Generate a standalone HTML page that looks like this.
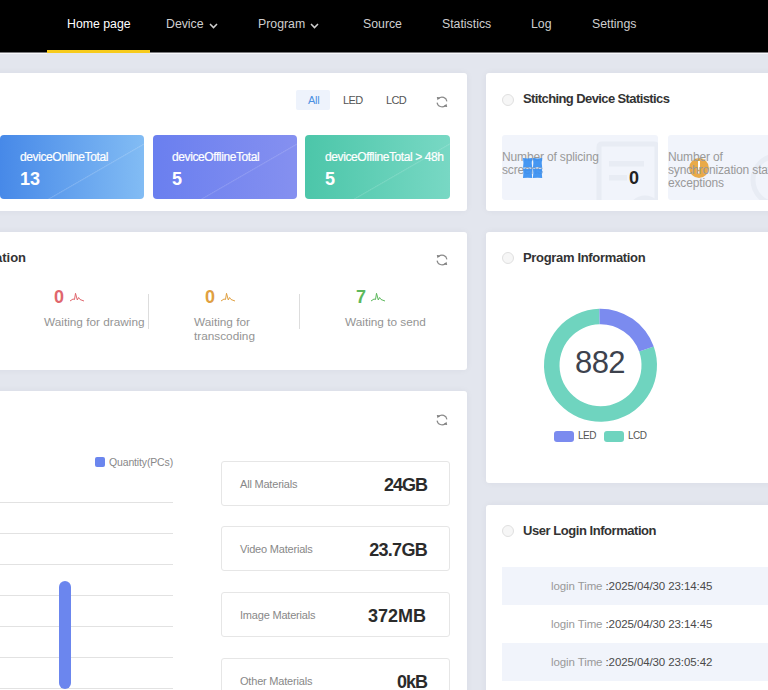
<!DOCTYPE html>
<html><head><meta charset="utf-8">
<style>
*{margin:0;padding:0;box-sizing:border-box}
html,body{width:768px;height:690px;overflow:hidden;background:#e3e6ee;font-family:"Liberation Sans",sans-serif}
.abs{position:absolute}
.nav{position:absolute;left:0;top:0;width:768px;height:52px;background:#000}
.nav .it{position:absolute;top:17px;font-size:12.3px;color:#cfcfcf;white-space:nowrap;line-height:15px}
.nav .home{color:#fff}
.nav .ul{position:absolute;left:47px;top:50px;width:103px;height:3px;background:#f7cb1c;z-index:2}
.navl1{position:absolute;left:0;top:52px;width:768px;height:1px;background:#7a7a7e}
.navl2{position:absolute;left:0;top:53px;width:768px;height:1px;background:#f7f8fb}
.chev{position:absolute;width:5px;height:5px;border-right:1.3px solid #cfcfcf;border-bottom:1.3px solid #cfcfcf;transform:rotate(45deg)}
.card{position:absolute;background:#fff;border-radius:3px;box-shadow:0 0 7px rgba(20,30,60,0.05)}
.t{position:absolute;white-space:nowrap}
.title{font-size:13px;font-weight:bold;color:#333}
.ico-c{position:absolute;width:12px;height:12px;border-radius:50%;border:1px solid #e0e0e0;background:#f6f6f6}
.stat{position:absolute;top:135px;width:144px;height:64px;border-radius:4px;overflow:hidden}
.stat .l{position:absolute;left:20px;top:149px;font-size:12px;color:#fff}
.lbl{font-size:12px;color:#fff;letter-spacing:-0.4px;-webkit-text-stroke:0.2px #fff}
.num{font-size:18px;font-weight:bold;color:#fff}
.mat{position:absolute;left:221px;width:229px;height:45px;border:1px solid #e6e6e6;border-radius:3px}
.mat .n{position:absolute;left:18px;top:16px;font-size:11px;color:#888;letter-spacing:-0.2px}
.mat .v{position:absolute;right:23px;top:13px;font-size:18px;font-weight:bold;color:#2b2b2b}
.grid{position:absolute;left:0;width:173px;height:1px;background:#e2e2e2}
.row{position:absolute;left:502px;width:266px;height:38px}
.row .tx{position:absolute;left:49px;top:13px;font-size:11.5px;color:#999;white-space:nowrap;letter-spacing:-0.1px}
.row .tx b{font-weight:normal;color:#4a4a4a}
</style></head><body>
<div class="nav">
  <div class="it home" style="left:67px">Home page</div>
  <div class="it" style="left:166px">Device</div><svg class="abs" style="left:209px;top:22.5px" width="9" height="6" viewBox="0 0 9 6"><path d="M1,1 L4.5,4.6 L8,1" fill="none" stroke="#d0d0d0" stroke-width="1.5"/></svg>
  <div class="it" style="left:258px">Program</div><svg class="abs" style="left:310px;top:22.5px" width="9" height="6" viewBox="0 0 9 6"><path d="M1,1 L4.5,4.6 L8,1" fill="none" stroke="#d0d0d0" stroke-width="1.5"/></svg>
  <div class="it" style="left:363px">Source</div>
  <div class="it" style="left:442px">Statistics</div>
  <div class="it" style="left:531px">Log</div>
  <div class="it" style="left:592px">Settings</div>
  <div class="ul"></div>
</div>

<div class="navl1"></div><div class="navl2" style="width:47px"></div><div class="navl2" style="left:150px;width:618px"></div>
<div class="abs" style="left:47px;top:50px;width:103px;height:3px;background:#f5c928"></div>
<!-- left card 1 -->
<div class="card" style="left:-10px;top:73px;width:477px;height:138px"></div>
<div class="abs" style="left:296px;top:90px;width:34px;height:20px;background:#eef3fc;border-radius:2px"></div>
<div class="t" style="left:308px;top:94px;font-size:11px;letter-spacing:-0.3px;color:#4a90e2">All</div>
<div class="t" style="left:343px;top:94px;font-size:11px;letter-spacing:-0.6px;color:#555">LED</div>
<div class="t" style="left:386px;top:94px;font-size:11px;letter-spacing:-0.6px;color:#555">LCD</div>

<div class="stat" style="left:0;background:linear-gradient(150deg,transparent 62%,rgba(255,255,255,0.18) 62.5%,transparent 63.5%),linear-gradient(90deg,#4789e8,#82bcf4)"></div>
<div class="stat" style="left:153px;background:linear-gradient(150deg,transparent 62%,rgba(255,255,255,0.15) 62.5%,transparent 63.5%),linear-gradient(90deg,#6a7fef,#8590f0)"></div>
<div class="stat" style="left:305px;width:145px;background:linear-gradient(150deg,transparent 62%,rgba(255,255,255,0.15) 62.5%,transparent 63.5%),linear-gradient(90deg,#4cc6a9,#78d8c4)"></div>
<div class="t lbl" style="left:20px;top:150px">deviceOnlineTotal</div>
<div class="t num" style="left:20px;top:169px">13</div>
<div class="t lbl" style="left:172px;top:150px">deviceOfflineTotal</div>
<div class="t num" style="left:172px;top:169px">5</div>
<div class="t lbl" style="left:325px;top:150px">deviceOfflineTotal &gt; 48h</div>
<div class="t num" style="left:325px;top:169px">5</div>
<svg class="abs" style="left:435px;top:95px" width="14" height="14" viewBox="0 0 14 14"><path d="M3.7,3.5 A4.9,4.9 0 0 1 11.9,6.3 M2.1,7.6 A4.9,4.9 0 0 0 10.3,10.5" fill="none" stroke="#8a8a8a" stroke-width="1.2"/><path d="M1.8,2.0 L5.2,2.6 L2.6,5.3Z M12.2,12.0 L8.8,11.4 L11.4,8.7Z" fill="#7d7d7d"/></svg>
<!-- left card 2 -->
<div class="card" style="left:-10px;top:232px;width:477px;height:138px"></div>
<div class="t title" style="left:-5px;top:250px">ation</div>


<svg class="abs" style="left:435px;top:253px" width="14" height="14" viewBox="0 0 14 14"><path d="M3.7,3.5 A4.9,4.9 0 0 1 11.9,6.3 M2.1,7.6 A4.9,4.9 0 0 0 10.3,10.5" fill="none" stroke="#8a8a8a" stroke-width="1.2"/><path d="M1.8,2.0 L5.2,2.6 L2.6,5.3Z M12.2,12.0 L8.8,11.4 L11.4,8.7Z" fill="#7d7d7d"/></svg>
<div class="t" style="left:54px;top:287px;font-size:18px;font-weight:bold;color:#e0666d">0</div>
<svg class="abs" style="left:70px;top:293px" width="16" height="10" viewBox="0 0 16 10"><path d="M0,8 L3,6 L4.5,6.5 L5.5,0.3 L7.3,7 L8.6,4.5 L10,6.5 L14,8" fill="none" stroke="#e0666d" stroke-width="1"/></svg>
<div class="t" style="left:44px;top:315px;font-size:11.8px;color:#949494">Waiting for drawing</div>
<div class="abs" style="left:148px;top:294px;width:1px;height:35px;background:#ddd"></div>
<div class="t" style="left:205px;top:287px;font-size:18px;font-weight:bold;color:#e0a040">0</div>
<svg class="abs" style="left:221px;top:293px" width="16" height="10" viewBox="0 0 16 10"><path d="M0,8 L3,6 L4.5,6.5 L5.5,0.3 L7.3,7 L8.6,4.5 L10,6.5 L14,8" fill="none" stroke="#e0a040" stroke-width="1"/></svg>
<div class="t" style="left:194px;top:315px;font-size:11.8px;color:#949494;line-height:14px">Waiting for<br>transcoding</div>
<div class="abs" style="left:299px;top:294px;width:1px;height:35px;background:#ddd"></div>
<div class="t" style="left:356px;top:287px;font-size:18px;font-weight:bold;color:#5cb85c">7</div>
<svg class="abs" style="left:371px;top:293px" width="16" height="10" viewBox="0 0 16 10"><path d="M0,8 L3,6 L4.5,6.5 L5.5,0.3 L7.3,7 L8.6,4.5 L10,6.5 L14,8" fill="none" stroke="#5cb85c" stroke-width="1"/></svg>
<div class="t" style="left:345px;top:315px;font-size:11.8px;color:#949494">Waiting to send</div>

<!-- left card 3 -->
<div class="card" style="left:-10px;top:391px;width:477px;height:310px"></div>


<svg class="abs" style="left:435px;top:413px" width="14" height="14" viewBox="0 0 14 14"><path d="M3.7,3.5 A4.9,4.9 0 0 1 11.9,6.3 M2.1,7.6 A4.9,4.9 0 0 0 10.3,10.5" fill="none" stroke="#8a8a8a" stroke-width="1.2"/><path d="M1.8,2.0 L5.2,2.6 L2.6,5.3Z M12.2,12.0 L8.8,11.4 L11.4,8.7Z" fill="#7d7d7d"/></svg>
<div class="abs" style="left:95px;top:457px;width:10px;height:10px;background:#6b86ee;border-radius:2px"></div>
<div class="t" style="left:109px;top:456px;font-size:10.5px;color:#888;letter-spacing:-0.15px">Quantity(PCs)</div>
<div class="grid" style="top:502px"></div><div class="grid" style="top:533px"></div><div class="grid" style="top:564px"></div><div class="grid" style="top:595px"></div><div class="grid" style="top:626px"></div><div class="grid" style="top:657px"></div><div class="grid" style="top:688px"></div>
<div class="abs" style="left:59px;top:581px;width:12px;height:108px;background:#6b86ee;border-radius:6px"></div>
<div class="mat" style="top:461px"><div class="n">All Materials</div><div class="v" style="letter-spacing:-1px;right:22px">24GB</div></div>
<div class="mat" style="top:526px"><div class="n">Video Materials</div><div class="v" style="letter-spacing:-0.7px;right:22px">23.7GB</div></div>
<div class="mat" style="top:592px"><div class="n">Image Materials</div><div class="v">372MB</div></div>
<div class="mat" style="top:658px"><div class="n">Other Materials</div><div class="v" style="letter-spacing:-1px;right:22px">0kB</div></div>

<!-- right card 1 -->
<div class="card" style="left:486px;top:73px;width:300px;height:138px"></div>
<div class="ico-c" style="left:502px;top:94px"></div>
<div class="t title" style="left:523px;top:91px;letter-spacing:-0.6px">Stitching Device Statistics</div>


<div class="abs" style="left:502px;top:135px;width:156px;height:65px;background:#f1f4fb;border-radius:3px"></div>
<div class="abs" style="left:668px;top:135px;width:120px;height:65px;background:#f1f4fb;border-radius:3px"></div>
<svg class="abs" style="left:502px;top:135px" width="156" height="65" viewBox="0 0 156 65"><path d="M97,65 V12 Q97,9 100,9 H152 Q155,9 155,12 V65" fill="none" stroke="#e8ecf4" stroke-width="5"/><rect x="107" y="26" width="35" height="5.5" fill="#e8ecf4"/><rect x="107" y="40" width="18" height="5.5" fill="#e8ecf4"/><circle cx="143" cy="78" r="15" fill="none" stroke="#e8ecf4" stroke-width="5"/></svg>


<svg class="abs" style="left:668px;top:135px" width="100" height="65" viewBox="0 0 100 65"><circle cx="109" cy="45" r="24" fill="none" stroke="#e8ecf4" stroke-width="5"/></svg>
<div class="t" style="left:502px;top:151px;font-size:12px;color:#999;line-height:13px;letter-spacing:-0.15px">Number of splicing<br>screens</div>
<svg class="abs" style="left:523.2px;top:157.9px;opacity:0.93" width="20" height="21" viewBox="0 0 20 21"><path d="M0,0 Q4.6,0.9 9.2,0 Q8.299999999999999,4.85 9.2,9.7 Q4.6,8.799999999999999 0,9.7 Q0.9,4.85 0,0Z M9.9,0 Q14.55,0.9 19.2,0 Q18.3,4.85 19.2,9.7 Q14.55,8.799999999999999 9.9,9.7 Q10.8,4.85 9.9,0Z M0,10.4 Q4.6,11.3 9.2,10.4 Q8.299999999999999,15.25 9.2,20.1 Q4.6,19.200000000000003 0,20.1 Q0.9,15.25 0,10.4Z M9.9,10.4 Q14.55,11.3 19.2,10.4 Q18.3,15.25 19.2,20.1 Q14.55,19.200000000000003 9.9,20.1 Q10.8,15.25 9.9,10.4Z " fill="#3a90f2"/></svg>
<svg class="abs" style="left:688.5px;top:158.3px;opacity:0.9" width="20" height="20" viewBox="0 0 20 20"><circle cx="10" cy="10" r="9.9" fill="#e9a236"/><rect x="9" y="3" width="2" height="8.8" fill="#fff"/><rect x="9" y="13.3" width="2" height="2.2" fill="#fff"/></svg>
<div class="t" style="left:629px;top:168px;font-size:18px;font-weight:bold;color:#222">0</div>
<div class="t" style="left:668px;top:151px;font-size:12px;color:#999;line-height:13px;letter-spacing:-0.15px">Number of<br>synchronization statistics<br>exceptions</div>



<!-- right card 2 -->
<div class="card" style="left:486px;top:232px;width:300px;height:251px"></div>
<div class="ico-c" style="left:502px;top:252px"></div>
<div class="t title" style="left:523px;top:250px;letter-spacing:-0.33px">Program Information</div>


<svg class="abs" style="left:486px;top:232px" width="282" height="251" viewBox="0 0 282 251"><path d="M167.76,114.44 A56.5,56.5 0 1 1 113.32,76.81 L113.64,92.31 A41,41 0 1 0 153.15,119.61Z" fill="#6fd4bf"/><path d="M113.32,76.81 A56.5,56.5 0 0 1 167.76,114.44 L153.15,119.61 A41,41 0 0 0 113.64,92.31Z" fill="#7b8bef"/></svg>
<div class="t" style="left:575px;top:345px;font-size:31px;letter-spacing:-0.6px;color:#3d424d">882</div>
<div class="abs" style="left:554px;top:431px;width:20px;height:11px;background:#7b8bef;border-radius:3px"></div>
<div class="t" style="left:578px;top:430px;font-size:10px;letter-spacing:-0.5px;color:#555">LED</div>
<div class="abs" style="left:604px;top:431px;width:20px;height:11px;background:#6fd4bf;border-radius:3px"></div>
<div class="t" style="left:628px;top:430px;font-size:10px;letter-spacing:-0.5px;color:#555">LCD</div>

<!-- right card 3 -->
<div class="card" style="left:486px;top:505px;width:300px;height:200px"></div>
<div class="ico-c" style="left:502px;top:525px"></div>
<div class="t title" style="left:523px;top:523px;letter-spacing:-0.45px">User Login Information</div>

<div class="row" style="top:567px;background:#f1f4fb"><div class="tx">login Time <b>:2025/04/30 23:14:45</b></div></div><div class="row" style="top:605px;background:#fff"><div class="tx">login Time <b>:2025/04/30 23:14:45</b></div></div><div class="row" style="top:643px;background:#f1f4fb"><div class="tx">login Time <b>:2025/04/30 23:05:42</b></div></div>
</body></html>
